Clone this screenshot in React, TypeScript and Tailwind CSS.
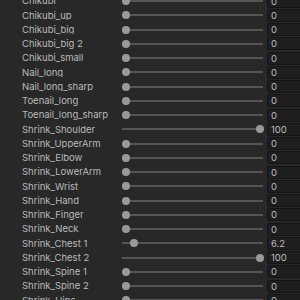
const rows: [string, number][] = [
  ["Chikubi", 0],
  ["Chikubi_up", 0],
  ["Chikubi_big", 0],
  ["Chikubi_big 2", 0],
  ["Chikubi_small", 0],
  ["Nail_long", 0],
  ["Nail_long_sharp", 0],
  ["Toenail_long", 0],
  ["Toenail_long_sharp", 0],
  ["Shrink_Shoulder", 100],
  ["Shrink_UpperArm", 0],
  ["Shrink_Elbow", 0],
  ["Shrink_LowerArm", 0],
  ["Shrink_Wrist", 0],
  ["Shrink_Hand", 0],
  ["Shrink_Finger", 0],
  ["Shrink_Neck", 0],
  ["Shrink_Chest 1", 6.2],
  ["Shrink_Chest 2", 100],
  ["Shrink_Spine 1", 0],
  ["Shrink_Spine 2", 0],
  ["Shrink_Hips", 0],
];

const Slider = ({ value }: { value: number }) => (
  <div className="relative w-[141px] shrink-0 h-full flex items-center">
    <div className="w-full h-[2px] bg-[#555555]" />
    <div
      className="absolute top-1/2 -translate-y-1/2 w-[8px] h-[8px] rounded-full bg-[#999999]"
      style={{ left: `${(134 * value) / 100}px` }}
    />
  </div>
);

export default function App() {
  return (
    <div
      className="w-[300px] h-[300px] overflow-hidden bg-[#282828] text-[#bababa] text-[9.5px]"
      style={{ fontFamily: "Inter, 'Liberation Sans', sans-serif" }}
    >
      <div className="-mt-[6px]">
        {rows.map(([name, value]) => (
          <div key={name} className="flex items-center h-[14.25px]">
            <div className="w-[122px] shrink-0 pl-[22px] leading-none whitespace-nowrap overflow-hidden">
              {name}
            </div>
            <Slider value={value} />
            <div className="ml-[4px] w-[40px] h-[13px] shrink-0 bg-[#1e1e1e] border border-[#151515] rounded-l-[2px] pl-[3px] leading-[11px]">
              {value}
            </div>
          </div>
        ))}
      </div>
    </div>
  );
}
